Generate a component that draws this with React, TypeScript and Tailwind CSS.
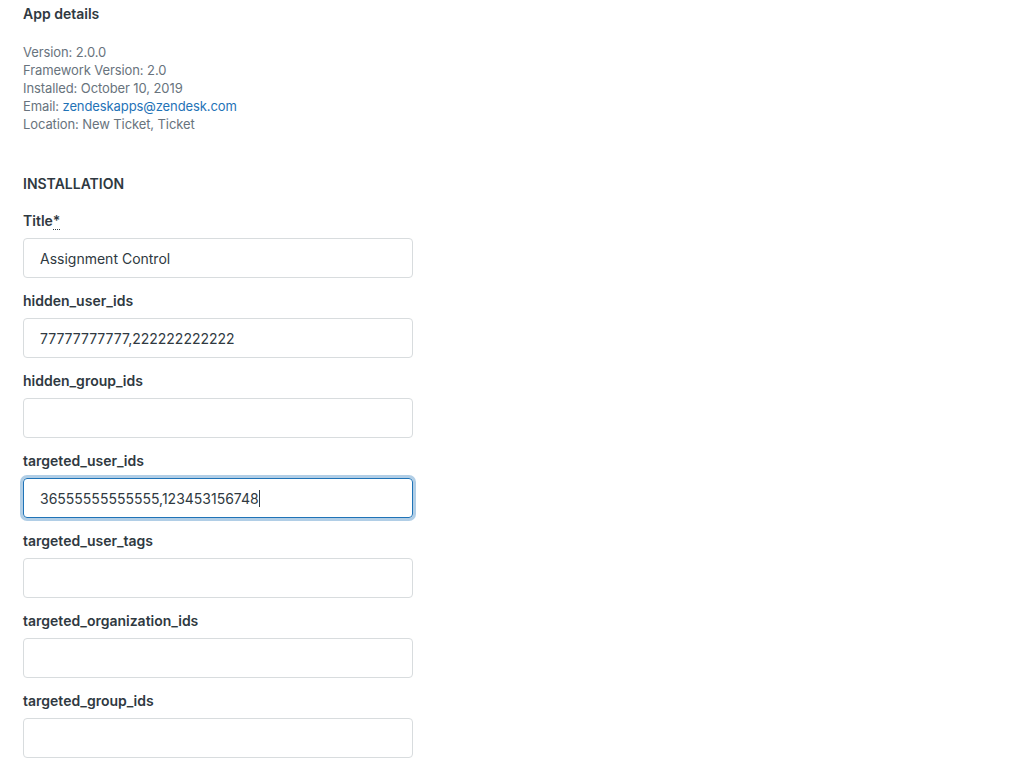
const fields: { label: string; value: string; focused?: boolean; required?: boolean }[] = [
  { label: "Title", value: "Assignment Control", required: true },
  { label: "hidden_user_ids", value: "77777777777,222222222222" },
  { label: "hidden_group_ids", value: "" },
  { label: "targeted_user_ids", value: "36555555555555,123453156748", focused: true },
  { label: "targeted_user_tags", value: "" },
  { label: "targeted_organization_ids", value: "" },
  { label: "targeted_group_ids", value: "" },
];

function Field({ label, value, focused, required }: (typeof fields)[number]) {
  return (
    <div className="mt-[13px]">
      <div className="h-5 text-[14px] leading-5 font-semibold text-[#2f3941] mb-[7px]">
        {label}
        {required && (
          <abbr title="required" className="no-underline border-b border-dotted border-[#2f3941] font-semibold">
            *
          </abbr>
        )}
      </div>
      <div
        className={
          focused
            ? "w-[390px] h-10 rounded-[4px] border border-[#1f73b7] shadow-[0_0_0_3px_rgba(31,115,183,0.35)] pl-4 flex items-center text-[14px] text-[#2f3941]"
            : "w-[390px] h-10 rounded-[4px] border border-[#d8dcde] pl-4 flex items-center text-[14px] text-[#2f3941]"
        }
      >
        {value}
        {focused && <span className="inline-block w-px h-[17px] bg-[#2f3941]" />}
      </div>
    </div>
  );
}

export default function App() {
  return (
    <div className="min-h-screen bg-white px-[23px] pt-[4px] font-['Inter','Noto_Sans',sans-serif]">
      <h2 className="text-[14px] leading-5 font-semibold text-[#2f3941]">App details</h2>
      <div className="mt-[19px] text-[13px] leading-[18px] tracking-[-0.1px] text-[#68737d]">
        <div>Version: 2.0.0</div>
        <div>Framework Version: 2.0</div>
        <div>Installed: October 10, 2019</div>
        <div>
          Email: <a className="text-[#1f73b7]">zendeskapps@zendesk.com</a>
        </div>
        <div>Location: New Ticket, Ticket</div>
      </div>
      <h3 className="mt-[41px] text-[14px] leading-5 font-semibold text-[#2f3941]">INSTALLATION</h3>
      <div className="mt-[4px] flex flex-col">
        {fields.map((f) => (
          <Field key={f.label} {...f} />
        ))}
      </div>
    </div>
  );
}
